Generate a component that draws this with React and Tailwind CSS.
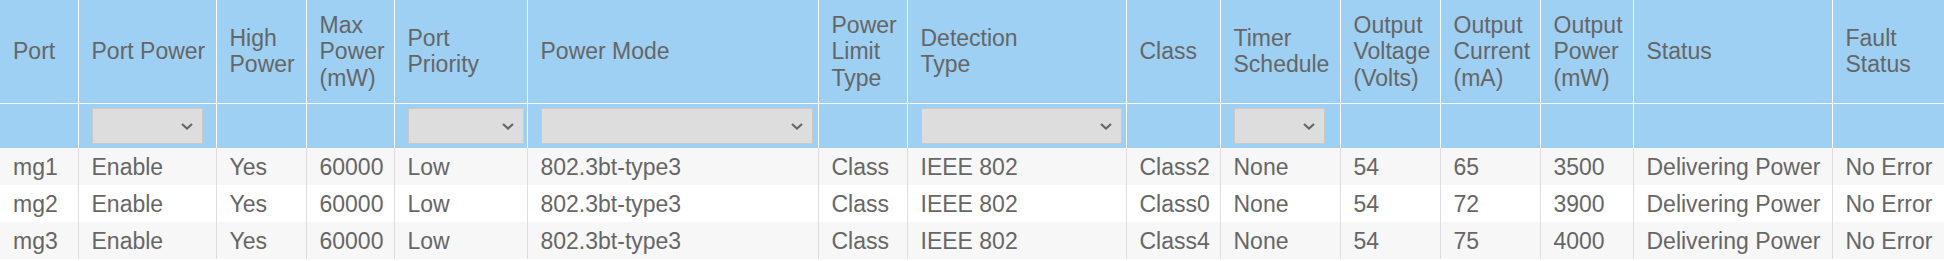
import React from "react";

const columns = [
  { key: "port", label: "Port", width: 78 },
  { key: "portPower", label: "Port Power", width: 138, select: 111 },
  { key: "highPower", label: "High Power", width: 90 },
  { key: "maxPower", label: "Max Power (mW)", width: 88 },
  { key: "priority", label: "Port Priority", width: 133, select: 116 },
  { key: "mode", label: "Power Mode", width: 291, select: 272 },
  { key: "limit", label: "Power Limit Type", width: 89 },
  { key: "detection", label: ["Detection", "Type"], width: 219, select: 201 },
  { key: "cls", label: "Class", width: 94 },
  { key: "timer", label: "Timer Schedule", width: 120, select: 91 },
  { key: "voltage", label: "Output Voltage (Volts)", width: 100 },
  { key: "current", label: "Output Current (mA)", width: 100 },
  { key: "power", label: "Output Power (mW)", width: 93 },
  { key: "status", label: "Status", width: 199 },
  { key: "fault", label: "Fault Status", width: 112 },
];

const rows = [
  ["mg1", "Enable", "Yes", "60000", "Low", "802.3bt-type3", "Class", "IEEE 802", "Class2", "None", "54", "65", "3500", "Delivering Power", "No Error"],
  ["mg2", "Enable", "Yes", "60000", "Low", "802.3bt-type3", "Class", "IEEE 802", "Class0", "None", "54", "72", "3900", "Delivering Power", "No Error"],
  ["mg3", "Enable", "Yes", "60000", "Low", "802.3bt-type3", "Class", "IEEE 802", "Class4", "None", "54", "75", "4000", "Delivering Power", "No Error"],
];

function FilterSelect({ width }) {
  return (
    <div className="relative h-[36px]" style={{ width }}>
      <select className="h-full w-full appearance-none border border-[#c9c9c9] bg-[#dddddd] outline-none" />
      <svg
        className="pointer-events-none absolute right-[10px] top-[15px]"
        width="12"
        height="7"
        viewBox="0 0 12 7"
        fill="none"
      >
        <path d="M1 1l5 4.5L11 1" stroke="#666666" strokeWidth="2.2" />
      </svg>
    </div>
  );
}

export default function App() {
  return (
    <div className="w-[1944px] h-[261px] overflow-hidden bg-white font-['Liberation_Sans',Arial,sans-serif] text-[23px] text-[#666666]">
      <table className="table-fixed border-collapse w-[1944px]">
        <colgroup>
          {columns.map((c) => (
            <col key={c.key} style={{ width: c.width }} />
          ))}
        </colgroup>
        <thead>
          <tr className="bg-[#9dd0f3] h-[103px]">
            {columns.map((c) => (
              <th
                key={c.key}
                className="border-x border-b border-white first:border-l-0 last:border-r-0 pl-[13px] pr-1 text-left align-middle font-normal leading-[26.5px]"
              >
                {Array.isArray(c.label) ? (
                  <>
                    {c.label[0]}
                    <br />
                    {c.label[1]}
                  </>
                ) : (
                  c.label
                )}
              </th>
            ))}
          </tr>
          <tr className="bg-[#9dd0f3] h-[45px]">
            {columns.map((c) => (
              <td
                key={c.key}
                className="border-x border-white first:border-l-0 last:border-r-0 pl-[13px] align-middle"
              >
                {c.select ? <FilterSelect width={c.select} /> : null}
              </td>
            ))}
          </tr>
        </thead>
        <tbody>
          {rows.map((r, i) => (
            <tr key={i} className={`h-[37px] ${i % 2 === 0 ? "bg-[#f7f7f7]" : "bg-white"}`}>
              {r.map((v, j) => (
                <td
                  key={j}
                  className="border-x border-[#dddddd] first:border-l-0 last:border-r-0 pl-[13px] align-middle leading-[26px] whitespace-nowrap overflow-hidden"
                >
                  {v}
                </td>
              ))}
            </tr>
          ))}
        </tbody>
      </table>
    </div>
  );
}
